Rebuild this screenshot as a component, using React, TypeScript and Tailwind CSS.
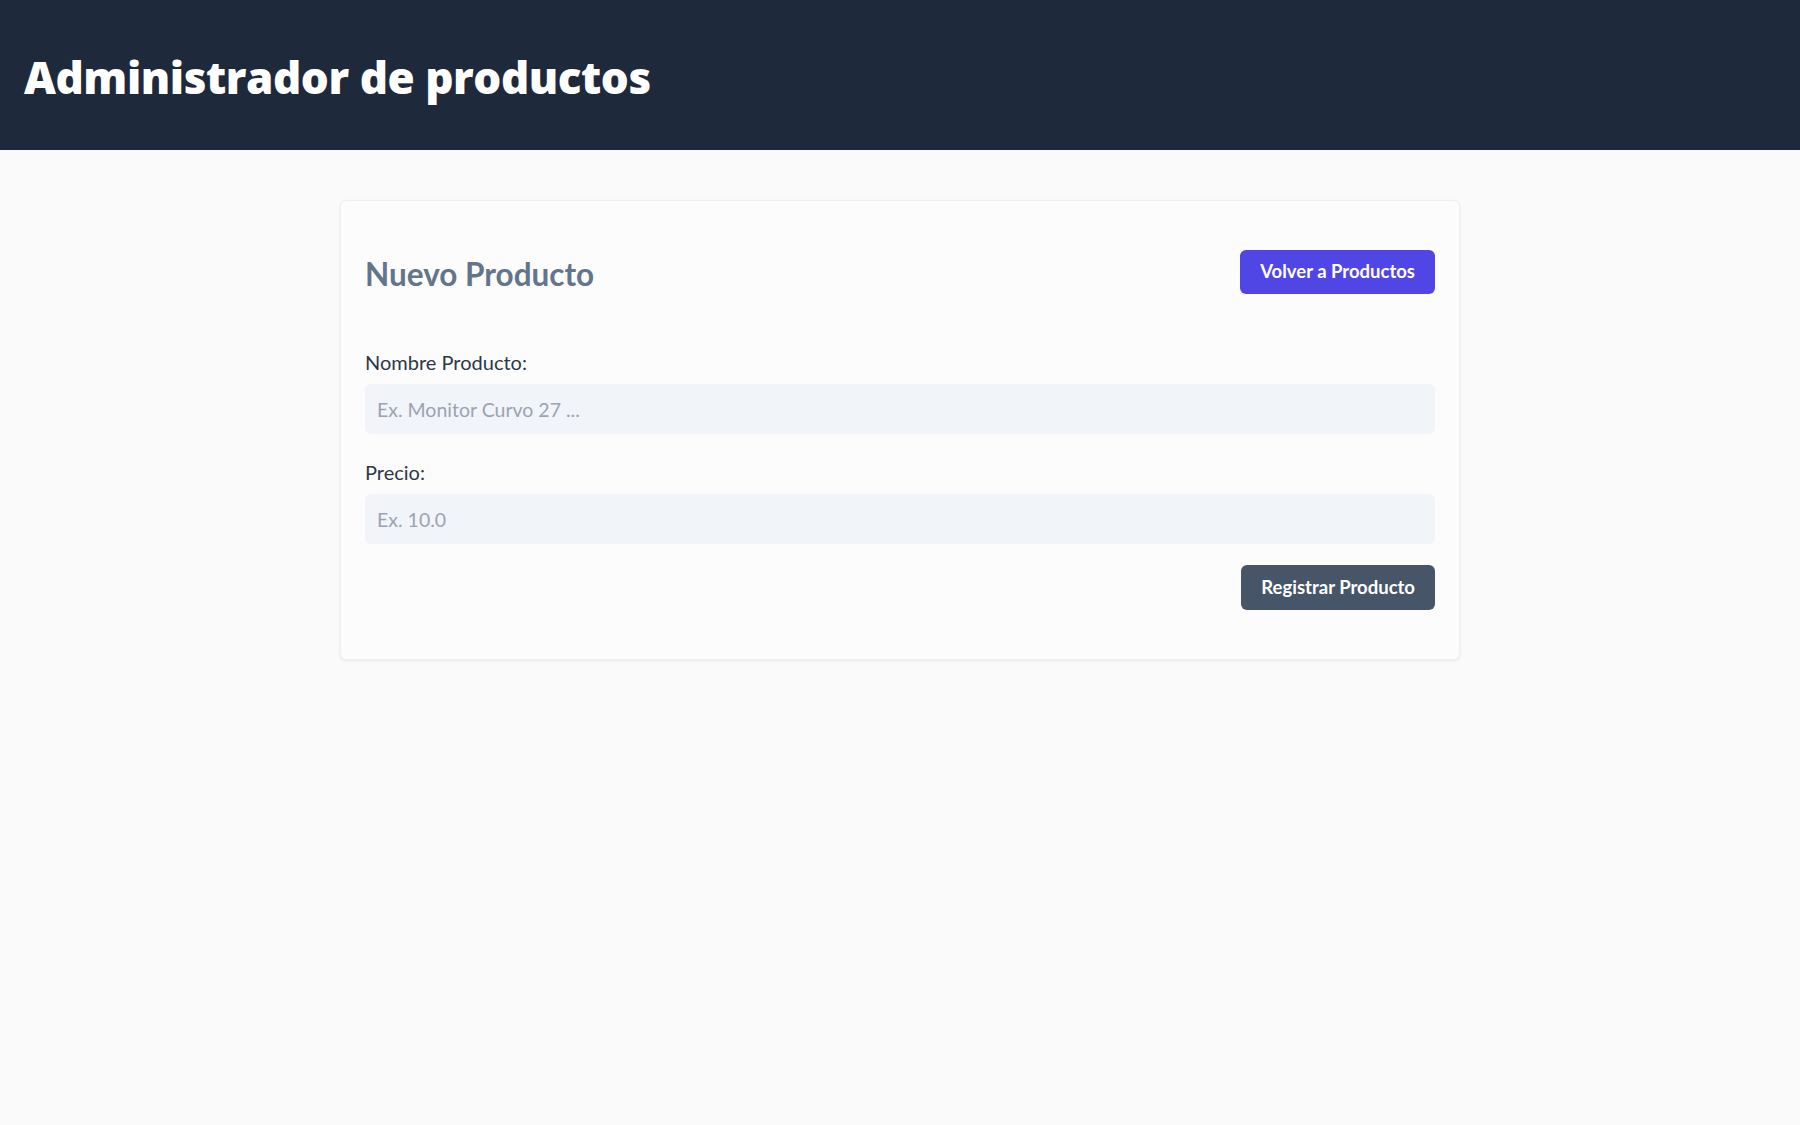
export default function App() {
  return (
    <div className="min-h-screen bg-[#fafafa] font-['Lato','Noto_Sans',sans-serif]">
      <header className="flex h-[150px] items-center bg-[#1e293b] px-6 pt-1">
        <h1 className="font-['Open_Sans','Noto_Sans',sans-serif] text-[44px] font-extrabold leading-none tracking-[-0.01em] text-white">
          Administrador de productos
        </h1>
      </header>

      <main className="pt-[50px]">
        <div className="mx-auto w-[1120px] rounded-md border border-[#f0f0f0] bg-[#fcfcfc] px-6 py-[49px] shadow-[0_1px_3px_rgba(0,0,0,0.08)]">
          <div className="mb-[54px] flex items-center justify-between">
            <h2 className="pt-1 text-[31.5px] font-bold leading-9 text-[#64748b]">Nuevo Producto</h2>
            <button className="h-11 rounded-md bg-[#4f46e5] px-5 text-[18.5px] font-bold text-white">
              Volver a Productos
            </button>
          </div>

          <form>
            <div className="mb-6">
              <label className="mb-2 block text-[20px] leading-7 text-[#2d3748]">Nombre Producto:</label>
              <input
                type="text"
                placeholder="Ex. Monitor Curvo 27 ..."
                className="block h-[50px] w-full rounded-md bg-[#f1f5f9] px-3 text-[19.5px] text-[#1e293b] outline-none placeholder:text-[#9ca3af]"
              />
            </div>
            <div>
              <label className="mb-2 block text-[20px] leading-7 text-[#2d3748]">Precio:</label>
              <input
                type="number"
                placeholder="Ex. 10.0"
                className="block h-[50px] w-full rounded-md bg-[#f1f5f9] px-3 text-[19.5px] text-[#1e293b] outline-none placeholder:text-[#9ca3af]"
              />
            </div>
            <div className="mt-[21px] flex justify-end">
              <button type="button" className="h-[45px] rounded-md bg-[#475569] px-5 text-[18.5px] font-bold text-white">
                Registrar Producto
              </button>
            </div>
          </form>
        </div>
      </main>
    </div>
  );
}
